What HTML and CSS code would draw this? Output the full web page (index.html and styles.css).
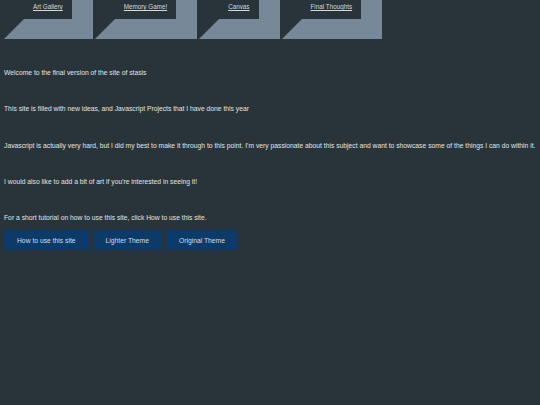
FILE: index.html
```html
<!DOCTYPE html>
<html lang="en">
<head>
<meta charset="utf-8">
<title>Stasis</title>
<link rel="stylesheet" href="styles.css">
</head>
<body>
<nav class="nav">
  <div class="nav-item"><a href="#">Art Gallery</a></div>
  <div class="nav-item"><a href="#">Memory Game!</a></div>
  <div class="nav-item"><a href="#">Canvas</a></div>
  <div class="nav-item"><a href="#">Final Thoughts</a></div>
</nav>
<main class="content">
  <p>Welcome to the final version of the site of stasis</p>
  <p>This site is filled with new ideas, and Javascript Projects that I have done this year</p>
  <p>Javascript is actually very hard, but I did my best to make it through to this point. I'm very passionate about this subject and want to showcase some of the things I can do within it.</p>
  <p>I would also like to add a bit of art if you're interested in seeing it!</p>
  <p>For a short tutorial on how to use this site, click How to use this site.</p>
  <div class="buttons">
    <button class="btn">How to use this site</button>
    <button class="btn">Lighter Theme</button>
    <button class="btn">Original Theme</button>
  </div>
</main>
</body>
</html>
```

FILE: styles.css
```css
html, body {
  margin: 0;
  padding: 0;
  background: #29343a;
}
body {
  padding: 0 4px;
  font-family: "Liberation Sans", Arial, sans-serif;
  color: #e2e4e5;
}
.nav {
  display: flex;
  gap: 2px;
}
.nav-item {
  background: #29343a;
  border-left: 20px solid #29343a;
  border-right: 21px solid #778899;
  border-bottom: 20px solid #778899;
  padding: 0 9px 11px;
  height: 8px;
  line-height: 8px;
}
.nav-item a {
  font-size: 6.3px;
  color: #d4d8db;
  text-decoration: underline;
  white-space: nowrap;
}
.content {
  padding-top: 30px;
}
.content p {
  margin: 0 0 28.3px;
  font-size: 6.75px;
  line-height: 8px;
  white-space: nowrap;
}
.content p:last-of-type {
  margin-bottom: 8px;
}
.buttons {
  display: flex;
  gap: 4px;
}
.btn {
  height: 20px;
  padding: 0 13px;
  border: none;
  background: #0c3b69;
  color: #d6dde4;
  font-family: "Liberation Sans", Arial, sans-serif;
  font-size: 6.75px;
}
```
